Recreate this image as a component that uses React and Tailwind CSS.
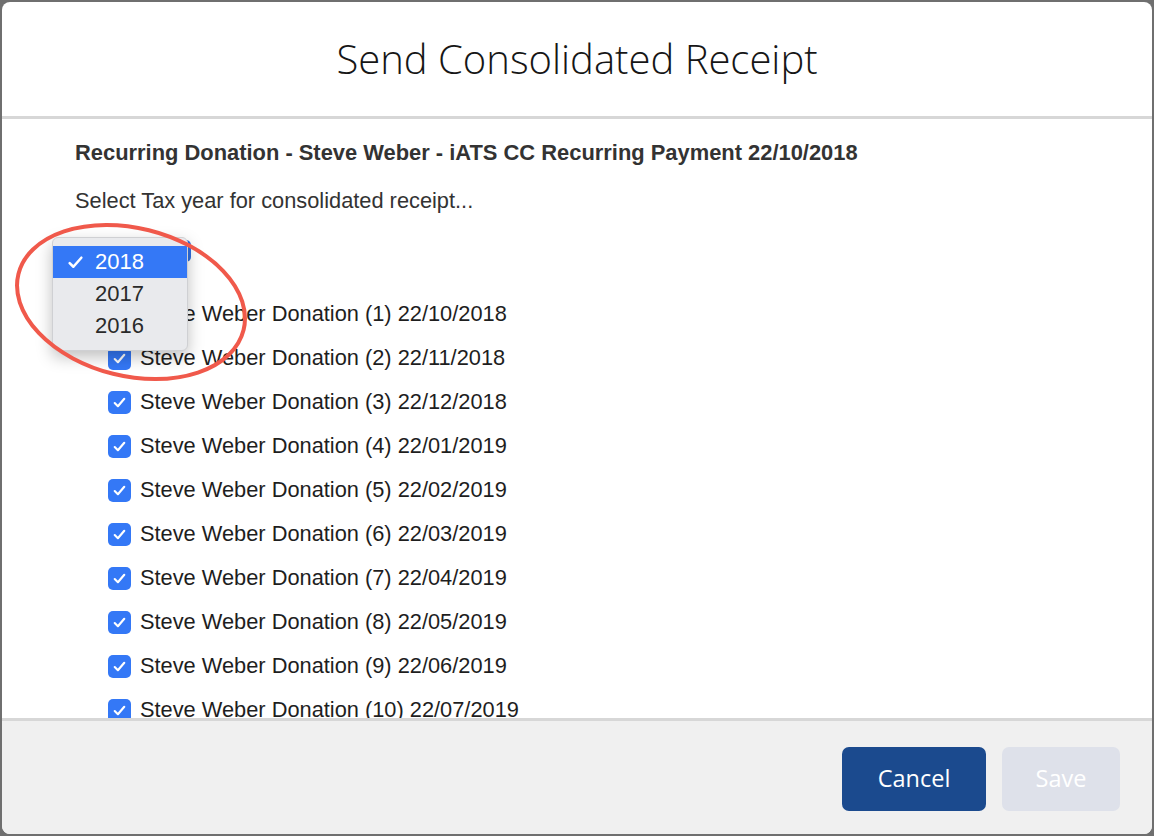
import React from 'react';

const donations = [
  ['1', '22/10/2018'],
  ['2', '22/11/2018'],
  ['3', '22/12/2018'],
  ['4', '22/01/2019'],
  ['5', '22/02/2019'],
  ['6', '22/03/2019'],
  ['7', '22/04/2019'],
  ['8', '22/05/2019'],
  ['9', '22/06/2019'],
  ['10', '22/07/2019'],
];

const CheckIcon = ({ className }) => (
  <svg viewBox="0 0 16 16" className={className} fill="none" stroke="currentColor" strokeWidth="2" strokeLinecap="round" strokeLinejoin="round">
    <path d="M3.5 8.5 L6.5 11.5 L12.5 4.5" />
  </svg>
);

const Checkbox = () => (
  <span className="flex items-center justify-center w-[23px] h-[23px] rounded-[5px] bg-[#3478f6] text-white">
    <CheckIcon className="w-[17px] h-[17px]" />
  </span>
);

const YearMenu = () => (
  <div className="absolute left-[52px] top-[237px] w-[136px] rounded-[6px] bg-[#e9eaed] border border-[#cfd0d3] shadow-[0_6px_16px_rgba(0,0,0,0.25)] py-[8px] text-[22px] leading-[32px] text-[#2a2a2a]">
    <div className="flex items-center bg-[#3478f6] text-white">
      <span className="w-[42px] flex justify-center pl-[2px]">
        <svg viewBox="0 0 16 16" className="w-[17px] h-[17px]" fill="none" stroke="currentColor" strokeWidth="2.4" strokeLinecap="round" strokeLinejoin="round">
          <path d="M2.5 8.5 L6 12 L13.5 3.5" />
        </svg>
      </span>
      <span>2018</span>
    </div>
    <div className="pl-[42px]">2017</div>
    <div className="pl-[42px]">2016</div>
  </div>
);

const Annotation = () => (
  <svg className="absolute left-0 top-0 pointer-events-none" width="300" height="420" viewBox="0 0 300 420">
    <ellipse cx="131" cy="302" rx="116" ry="74" transform="rotate(14 131 302)" fill="none" stroke="#f0594b" strokeWidth="4" />
  </svg>
);

export default function App() {
  return (
    <div className="relative w-[1154px] h-[836px] bg-[#6f6f6f] p-[2px] overflow-hidden" style={{ fontFamily: '"Liberation Sans", Arial, sans-serif' }}>
      <div className="flex flex-col h-full w-full rounded-[8px] overflow-hidden bg-white">
        <header className="h-[117px] shrink-0 flex items-center justify-center border-b-[3px] border-[#d7d7d7]">
          <h1 className="text-[40px] font-light text-[#161616]" style={{ fontFamily: '"Open Sans", "Noto Sans", sans-serif' }}>
            Send Consolidated Receipt
          </h1>
        </header>

        <main className="flex-1 overflow-hidden pl-[73px] pt-[21px] text-[#2b2b2b]">
          <h2 className="text-[21.9px] font-bold leading-[26px] text-[#333]">
            Recurring Donation - Steve Weber - iATS CC Recurring Payment 22/10/2018
          </h2>
          <p className="mt-[22px] text-[21.8px] leading-[26px] text-[#333]">Select Tax year for consolidated receipt...</p>

          <div className="mt-[26px] h-[22px] w-[116px] rounded-[5px] bg-[#2f6fe0]" />

          <ul className="mt-[30px] pl-[33px]">
            {donations.map(([n, d]) => (
              <li key={n} className="flex items-center gap-[9px] h-[44px] text-[21.8px] text-[#1e1e1e]">
                <Checkbox />
                <span>Steve Weber Donation ({n}) {d}</span>
              </li>
            ))}
          </ul>
        </main>

        <footer className="h-[116px] shrink-0 flex items-center justify-end gap-[16px] pr-[32px] pt-[3px] bg-[#f0f0f0] border-t-[3px] border-[#d7d7d7]" style={{ fontFamily: '"Open Sans", "Noto Sans", sans-serif' }}>
          <button className="w-[144px] h-[64px] rounded-[7px] bg-[#1b4a8e] text-white text-[23.5px]">Cancel</button>
          <button className="w-[118px] h-[64px] rounded-[7px] bg-[#dee1ea] text-white text-[23.5px]">Save</button>
        </footer>
      </div>

      <YearMenu />
      <Annotation />
    </div>
  );
}
